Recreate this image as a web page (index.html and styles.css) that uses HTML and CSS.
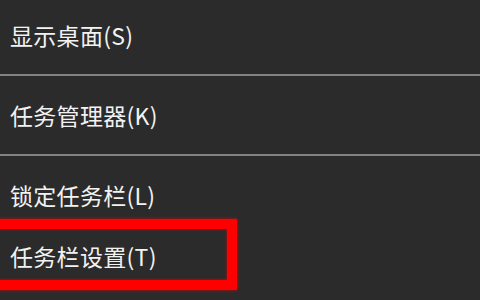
FILE: index.html
```html
<!DOCTYPE html>
<html>
<head>
  <title>任务栏菜单</title>
  <meta charset="UTF-8">
  <link rel="stylesheet" href="styles.css">
</head>
<body>
  <div class="menu">
    <div class="menu-item">显示桌面(S)</div>
    <div class="separator"></div>
    <div class="menu-item">任务管理器(K)</div>
    <div class="separator"></div>
    <div class="menu-item">锁定任务栏(L)</div>
    <div class="menu-item">任务栏设置(T)</div>
    <div class="highlight"></div>
  </div>
</body>
</html>
```

FILE: styles.css
```css
body {
  margin: 0;
  padding: 0;
  width: 480px;
  height: 300px;
  overflow: hidden;
  background-color: #2b2b2b;
  color: #f2f2f2;
  font-family: "Noto Sans CJK SC", "Noto Sans", sans-serif;
}
.menu {
  position: relative;
  padding-top: 4px;
  height: 296px;
  background-color: #2b2b2b;
}
.menu-item {
  height: 61px;
  display: flex;
  align-items: center;
  padding-left: 10px;
  font-size: 23px;
  letter-spacing: 0.3px;
}
.separator {
  height: 2px;
  margin: 9px 0 8px;
  background-color: #828282;
}
.highlight {
  position: absolute;
  left: -20px;
  top: 219px;
  width: 237px;
  height: 51px;
  border: 10px solid #ff0000;
  box-shadow: 0 0 3px rgba(255, 0, 0, 0.8), inset 0 0 3px rgba(255, 0, 0, 0.8);
}
```
